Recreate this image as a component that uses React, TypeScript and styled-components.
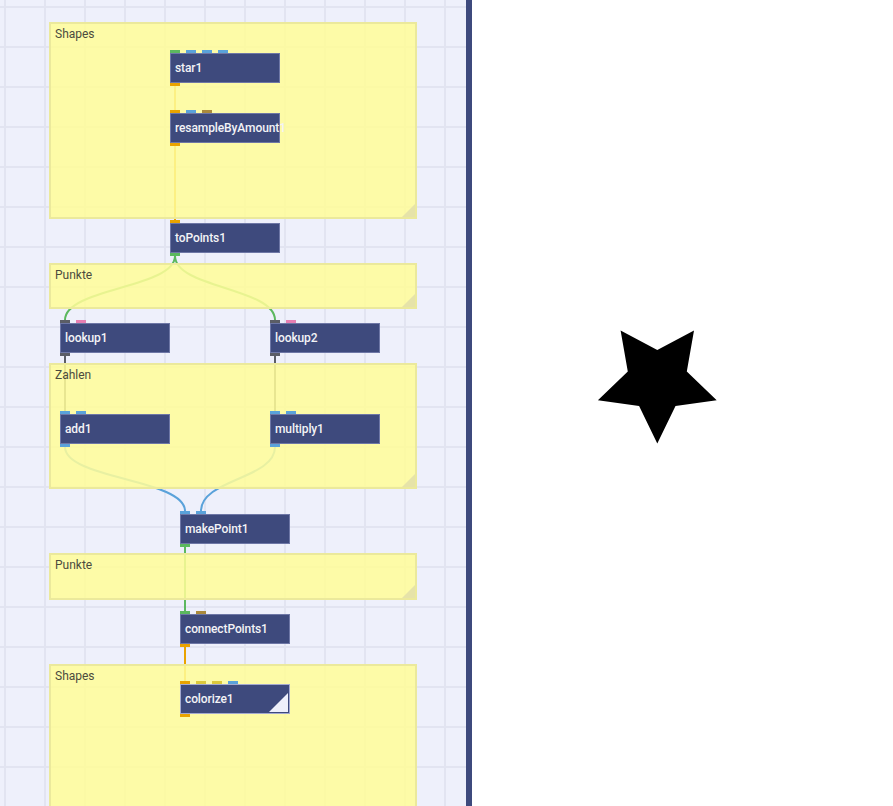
import styled, { createGlobalStyle } from 'styled-components';

const GlobalStyle = createGlobalStyle`
  html, body {
    margin: 0;
    height: 100%;
    overflow: hidden;
  }
  #root {
    height: 100%;
  }
`;

const colors = {
  canvas: '#eef0fb',
  grid: '#e2e4f1',
  node: '#3e4a7d',
  nodeBorder: '#6e77a6',
  green: '#5cb85f',
  blue: '#5aa2da',
  orange: '#e9a300',
  brown: '#aa8a3c',
  pink: '#e77fb2',
  grey: '#5b5d66',
  yellow: '#dcc93c',
};

type PortType = keyof typeof colors;

type NodeDef = {
  name: string;
  x: number;
  y: number;
  inputs: PortType[];
  output: PortType;
  rendered?: boolean;
};

type CommentDef = {
  title: string;
  y: number;
  height: number;
};

const comments: CommentDef[] = [
  { title: 'Shapes', y: 22, height: 197 },
  { title: 'Punkte', y: 263, height: 46 },
  { title: 'Zahlen', y: 363, height: 126 },
  { title: 'Punkte', y: 553, height: 47 },
  { title: 'Shapes', y: 664, height: 160 },
];

const nodes: NodeDef[] = [
  { name: 'star1', x: 170, y: 53, inputs: ['green', 'blue', 'blue', 'blue'], output: 'orange' },
  { name: 'resampleByAmount1', x: 170, y: 113, inputs: ['orange', 'blue', 'brown'], output: 'orange' },
  { name: 'toPoints1', x: 170, y: 223, inputs: ['orange'], output: 'green' },
  { name: 'lookup1', x: 60, y: 323, inputs: ['grey', 'pink'], output: 'grey' },
  { name: 'lookup2', x: 270, y: 323, inputs: ['grey', 'pink'], output: 'grey' },
  { name: 'add1', x: 60, y: 414, inputs: ['blue', 'blue'], output: 'blue' },
  { name: 'multiply1', x: 270, y: 414, inputs: ['blue', 'blue'], output: 'blue' },
  { name: 'makePoint1', x: 180, y: 514, inputs: ['blue', 'blue'], output: 'green' },
  { name: 'connectPoints1', x: 180, y: 614, inputs: ['green', 'brown'], output: 'orange' },
  {
    name: 'colorize1',
    x: 180,
    y: 684,
    inputs: ['orange', 'yellow', 'yellow', 'blue'],
    output: 'orange',
    rendered: true,
  },
];

// from node name -> [to node name, input index]
const connections: [string, string, number][] = [
  ['star1', 'resampleByAmount1', 0],
  ['resampleByAmount1', 'toPoints1', 0],
  ['toPoints1', 'lookup1', 0],
  ['toPoints1', 'lookup2', 0],
  ['lookup1', 'add1', 0],
  ['lookup2', 'multiply1', 0],
  ['add1', 'makePoint1', 0],
  ['multiply1', 'makePoint1', 1],
  ['makePoint1', 'connectPoints1', 0],
  ['connectPoints1', 'colorize1', 0],
];

const NODE_W = 110;
const NODE_H = 30;
const PORT_W = 10;
const PORT_STEP = 16;

const Window = styled.div`
  display: flex;
  height: 100vh;
  font-family: Roboto, 'Noto Sans', sans-serif;
`;

const NetworkPane = styled.div`
  position: relative;
  width: 466px;
  flex: none;
  overflow: hidden;
  background-color: ${colors.canvas};
  background-image: linear-gradient(to right, ${colors.grid} 2px, transparent 2px),
    linear-gradient(to bottom, ${colors.grid} 2px, transparent 2px);
  background-size: 40px 40px;
  background-position: 4px 6px;
`;

const Divider = styled.div`
  width: 6px;
  flex: none;
  background: ${colors.node};
`;

const Viewer = styled.div`
  flex: 1;
  background: #ffffff;
  overflow: hidden;

  svg {
    display: block;
  }
`;

const Wires = styled.svg`
  position: absolute;
  inset: 0;
  z-index: 1;
`;

const Comment = styled.div<{ $y: number; $h: number }>`
  position: absolute;
  left: 49px;
  top: ${({ $y }) => $y}px;
  width: 368px;
  height: ${({ $h }) => $h}px;
  box-sizing: border-box;
  z-index: 2;
  background: rgba(255, 253, 152, 0.86);
  border: 2px solid #ebe99c;
  padding: 2px 0 0 4px;
  font-size: 12px;
  line-height: 16px;
  color: #4b4b3e;

  &::after {
    content: '';
    position: absolute;
    right: 0;
    bottom: 0;
    width: 13px;
    height: 13px;
    background: #e6e3a9;
    clip-path: polygon(100% 0, 100% 100%, 0 100%);
  }
`;

const Node = styled.div<{ $x: number; $y: number; $rendered?: boolean }>`
  position: absolute;
  left: ${({ $x }) => $x}px;
  top: ${({ $y }) => $y}px;
  width: ${NODE_W}px;
  height: ${NODE_H}px;
  box-sizing: border-box;
  z-index: 3;
  display: flex;
  align-items: center;
  padding-left: 4px;
  background: ${colors.node};
  border: 1px solid ${({ $rendered }) => ($rendered ? '#a3a9cf' : colors.nodeBorder)};
  color: #f3f3f6;
  font-size: 12px;
  font-weight: 500;
  letter-spacing: -0.1px;
  white-space: nowrap;
`;

const Port = styled.span<{ $color: string; $index: number; $out?: boolean }>`
  position: absolute;
  left: ${({ $index }) => $index * PORT_STEP - 1}px;
  ${({ $out }) => ($out ? 'bottom: -4px;' : 'top: -4px;')}
  width: ${PORT_W}px;
  height: 3px;
  background: ${({ $color }) => $color};
`;

const RenderFlag = styled.span`
  position: absolute;
  right: 1px;
  bottom: 1px;
  width: 19px;
  height: 19px;
  background: #eef0fb;
  clip-path: polygon(100% 0, 100% 100%, 0 100%);
`;

const byName = Object.fromEntries(nodes.map((n) => [n.name, n]));

const wirePath = (from: NodeDef, to: NodeDef, input: number) => {
  const x1 = from.x + PORT_W / 2;
  const y1 = from.y + NODE_H + 3;
  const x2 = to.x + input * PORT_STEP + PORT_W / 2;
  const y2 = to.y - 3;
  const d = (y2 - y1) / 2;
  return `M${x1} ${y1} C${x1} ${y1 + d} ${x2} ${y2 - d} ${x2} ${y2}`;
};

const starPoints = (cx: number, cy: number, outer: number, inner: number) => {
  const pts: string[] = [];
  for (let i = 0; i < 10; i++) {
    const r = i % 2 === 0 ? outer : inner;
    const a = ((90 + i * 36) * Math.PI) / 180;
    pts.push(`${(cx + Math.cos(a) * r).toFixed(1)},${(cy + Math.sin(a) * r).toFixed(1)}`);
  }
  return pts.join(' ');
};

export default function App() {
  return (
    <>
      <GlobalStyle />
      <Window>
        <NetworkPane>
          <Wires width="466" height="806">
            {connections.map(([from, to, input]) => (
              <path
                key={`${from}-${to}-${input}`}
                d={wirePath(byName[from], byName[to], input)}
                fill="none"
                stroke={colors[byName[from].output]}
                strokeWidth={2}
              />
            ))}
          </Wires>
          {comments.map((c, i) => (
            <Comment key={i} $y={c.y} $h={c.height}>
              {c.title}
            </Comment>
          ))}
          {nodes.map((n) => (
            <Node key={n.name} $x={n.x} $y={n.y} $rendered={n.rendered}>
              {n.inputs.map((p, i) => (
                <Port key={i} $color={colors[p]} $index={i} />
              ))}
              {n.name}
              <Port $color={colors[n.output]} $index={0} $out />
              {n.rendered && <RenderFlag />}
            </Node>
          ))}
        </NetworkPane>
        <Divider />
        <Viewer>
          <svg width="421" height="806">
            <polygon points={starPoints(185.3, 381, 62.5, 31)} fill="#000" />
          </svg>
        </Viewer>
      </Window>
    </>
  );
}
